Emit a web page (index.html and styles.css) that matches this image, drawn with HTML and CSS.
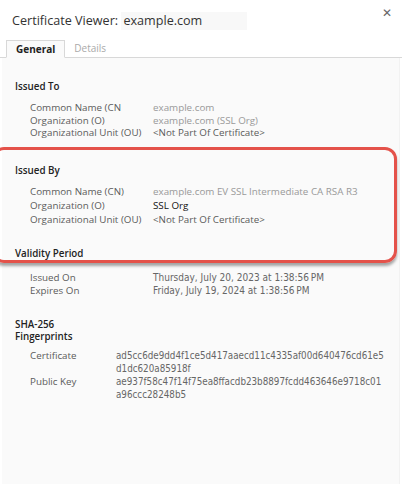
FILE: index.html
```html
<!DOCTYPE html>
<html>

<head>
  <title>Certificate Viewer</title>
  <meta charset="utf-8" />
  <link rel="stylesheet" href="styles.css">
</head>

<body>
  <div id="dialog">

    <div class="titlebar">
      <h1 class="title">Certificate Viewer: <span class="host">example.com</span></h1>
      <span class="close">&#x2715;</span>
    </div>

    <!-- tabs -->
    <div class="tabs">
      <div class="tab active">General</div>
      <div class="tab">Details</div>
    </div>

    <div class="panel">

      <div class="section subject">
        <h2>Issued To</h2>
        <div class="rows">
          <div class="label">Common Name (CN</div>
          <div class="value dim">example.com</div>
          <div class="label">Organization (O)</div>
          <div class="value dim">example.com (SSL Org)</div>
          <div class="label">Organizational Unit (OU)</div>
          <div class="value">&lt;Not Part Of Certificate&gt;</div>
        </div>
      </div>

      <div class="section issuer">
        <h2>Issued By</h2>
        <div class="rows">
          <div class="label">Common Name (CN)</div>
          <div class="value dim">example.com EV SSL Intermediate CA RSA R3</div>
          <div class="label">Organization (O)</div>
          <div class="value dark">SSL Org</div>
          <div class="label">Organizational Unit (OU)</div>
          <div class="value">&lt;Not Part Of Certificate&gt;</div>
        </div>
        <div class="highlight"></div>
      </div>

      <div class="section validity">
        <h2>Validity Period</h2>
        <div class="rows">
          <div class="label">Issued On</div>
          <div class="value date">Thursday, July 20, 2023 at 1:38:56&#8239;PM</div>
          <div class="label">Expires On</div>
          <div class="value date">Friday, July 19, 2024 at 1:38:56&#8239;PM</div>
        </div>
      </div>

      <div class="section prints">
        <h2>SHA-256<br>Fingerprints</h2>
        <div class="rows hashes">
          <div class="label">Certificate</div>
          <div class="value hex">ad5cc6de9dd4f1ce5d417aaecd11c4335af00d640476cd61e5<br>d1dc620a85918f</div>
          <div class="label">Public Key</div>
          <div class="value hex">ae937f58c47f14f75ea8ffacdb23b8897fcdd463646e9718c01<br>a96ccc28248b5</div>
        </div>
      </div>

    </div>
  </div>
</body>
</html>
```

FILE: styles.css
```css
* {
  margin: 0px;
  padding: 0px;
  box-sizing: border-box;
}

body {
  width: 402px;
  height: 484px;
  overflow: hidden;
  background: #fff;
  font-family: "Open Sans", "Noto Sans", sans-serif;
  color: #5a5a5a;
}

#dialog {
  height: 484px;
  display: flex;
  flex-direction: column;
}

.titlebar {
  display: flex;
  justify-content: space-between;
  padding: 12px 12px 0 12px;
  height: 40px;
}

.title {
  font-size: 12.6px;
  font-weight: 400;
  color: #333;
  line-height: 18px;
}

.host {
  display: inline-block;
  width: 126px;
  padding-left: 2px;
  background: #f8f8f8;
}

.close {
  font-family: "DejaVu Sans", sans-serif;
  font-size: 12px;
  color: #666;
  line-height: 12px;
  margin-top: -5px;
  margin-right: -2px;
}

.tabs {
  display: flex;
  padding-left: 6px;
  height: 18px;
  border-bottom: 1px solid #d8d8d8;
}

.tab {
  font-size: 10px;
  padding: 0 9px;
  line-height: 17px;
  color: #aaa;
}

.tab.active {
  font-weight: 700;
  color: #222;
  background: #fafafa;
  border: 1px solid #d8d8d8;
  border-bottom: 1px solid #fafafa;
  margin-bottom: -1px;
  height: 18px;
}

.panel {
  flex: 1;
  background: #fafafa;
  margin: 0 2px;
  border-right: 1px solid #f2f2f2;
  padding-top: 23px;
}

.section {
  padding-left: 13px;
}

.section h2 {
  font-size: 9.8px;
  font-weight: 600;
  color: #222;
  line-height: 12px;
}

.rows {
  display: grid;
  grid-template-columns: 123px 1fr;
  padding-left: 15px;
  font-size: 9.8px;
  line-height: 12.5px;
}

.subject h2 { margin-bottom: 9px; }
.subject { margin-bottom: 25px; }

.issuer h2 { margin-bottom: 8px; }
.issuer .rows { line-height: 14px; }
.issuer { margin-bottom: 21px; }

.validity h2 { margin-bottom: 11px; }
.validity .rows { line-height: 13px; }
.validity { margin-bottom: 22px; }

.prints h2 {
  line-height: 12px;
  margin-bottom: 6px;
}
.prints .rows { line-height: 13px; }

.value.dim {
  color: #999;
}

.value.dark {
  color: #111;
}

.issuer {
  position: relative;
}

/* red call-out drawn over the issuer block */
.highlight {
  position: absolute;
  left: -10px;
  right: 2px;
  top: -18px;
  height: 116px;
  border: 3px solid #e4524a;
  border-radius: 12px;
  box-shadow: 0 3px 3px rgba(0, 0, 0, 0.35);
  pointer-events: none;
}

.date {
  font-family: "DejaVu Sans Condensed", "DejaVu Sans", sans-serif;
  font-size: 10px;
  color: #666;
}

.hashes {
  grid-template-columns: 86px 1fr;
}

.hex {
  font-family: "DejaVu Sans Condensed", "DejaVu Sans", sans-serif;
  font-size: 9.75px;
  color: #666;
}
```
